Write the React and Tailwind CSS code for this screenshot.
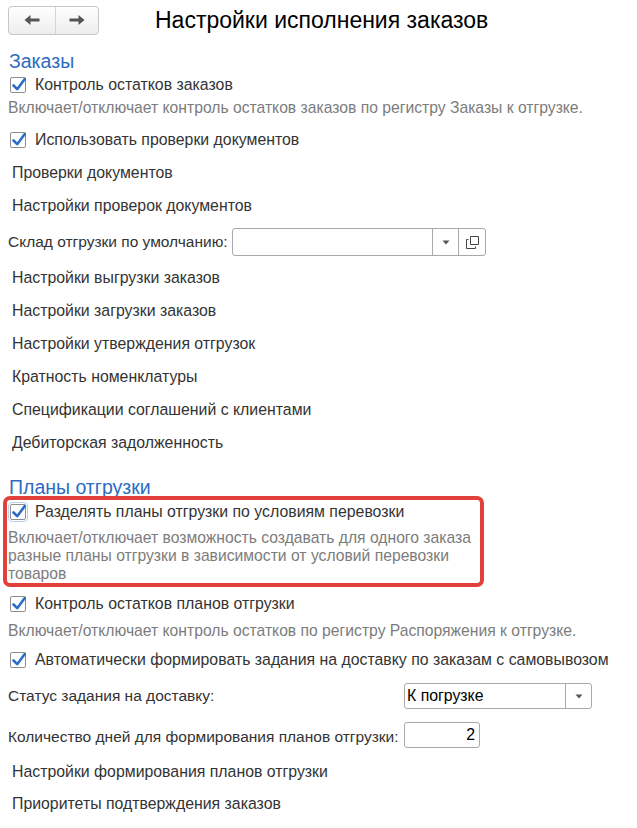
import React from 'react';

const font = { fontFamily: '"Liberation Sans", Arial, sans-serif' };

const Check = ({ focused }) => (
  <span
    className={`relative w-[16px] h-[16px] shrink-0 rounded-[2px] border border-[#8e8e8e] bg-white ${focused ? 'outline outline-1 outline-offset-1 outline-[#b9d1ee]' : ''}`}
  >
    <svg className="absolute left-[0px] top-[-2px]" width="16" height="17" viewBox="0 0 16 17">
      <path d="M2.5 9.5 L6.2 13.2 L13.8 3" fill="none" stroke="#2a6cc6" strokeWidth="2.6" strokeLinecap="round" strokeLinejoin="round" />
    </svg>
  </span>
);

const CheckRow = ({ children, className = '', focused }) => (
  <div className={`h-[22px] flex items-center gap-[9px] pl-[10px] text-[15.85px] text-[#333] ${className}`}>
    <Check focused={focused} />
    <span className="whitespace-nowrap">{children}</span>
  </div>
);

const Desc = ({ children, className = '' }) => (
  <div className={`pl-[8px] text-[15.7px] leading-[18px] whitespace-nowrap text-[#7c7c7c] ${className}`}>{children}</div>
);

const Link = ({ children, className = 'mt-[11px]' }) => (
  <div className={`h-[22px] flex items-center pl-[12px] text-[15.85px] text-[#333] ${className}`}>{children}</div>
);

const Section = ({ children, className = '' }) => (
  <div className={`pl-[9px] text-[19.5px] leading-[22px] text-[#2d6cc1] ${className}`}>{children}</div>
);

const Tri = () => (
  <svg width="8" height="5" viewBox="0 0 8 5">
    <path d="M0.5 0.5 H7.5 L4 4.5 Z" fill="#555" />
  </svg>
);

const App = () => {
  return (
    <div className="w-[637px] h-[828px] bg-white overflow-hidden" style={font}>
      {/* header */}
      <div className="h-[40px] flex items-center">
        <div className="ml-[8px] w-[91px] h-[29px] flex rounded-[4px] border border-[#c6c6c6] bg-gradient-to-b from-white to-[#ededed]">
          <div className="w-[47px] flex items-center justify-center border-r border-[#d6d6d6]">
            <svg width="16" height="12" viewBox="0 0 16 12">
              <path d="M0.5 6 L6.5 1 V4.4 H15.5 V7.6 H6.5 V11 Z" fill="#555" />
            </svg>
          </div>
          <div className="flex-1 flex items-center justify-center">
            <svg width="16" height="12" viewBox="0 0 16 12">
              <path d="M15.5 6 L9.5 1 V4.4 H0.5 V7.6 H9.5 V11 Z" fill="#555" />
            </svg>
          </div>
        </div>
        <div className="ml-[56px] text-[23px] text-black leading-[28px] whitespace-nowrap">Настройки исполнения заказов</div>
      </div>

      <Section className="mt-[10px]">Заказы</Section>
      <CheckRow className="mt-[2px]">Контроль остатков заказов</CheckRow>
      <Desc className="mt-[3px]">Включает/отключает контроль остатков заказов по регистру Заказы к отгрузке.</Desc>
      <CheckRow className="mt-[12px]">Использовать проверки документов</CheckRow>
      <Link>Проверки документов</Link>
      <Link>Настройки проверок документов</Link>

      <div className="mt-[11px] h-[28px] flex items-center text-[15.5px] text-[#333]">
        <span className="pl-[8px] w-[232px] whitespace-nowrap">Склад отгрузки по умолчанию:</span>
        <div className="w-[254px] h-[28px] flex rounded-[3px] border border-[#a9a9a9] bg-white">
          <div className="flex-1 border-r border-[#a9a9a9]" />
          <div className="w-[26px] flex items-center justify-center border-r border-[#a9a9a9]">
            <Tri />
          </div>
          <div className="w-[26px] flex items-center justify-center">
            <svg width="13" height="13" viewBox="0 0 13 13">
              <path d="M4.5 0.5 H12.5 V8.5 H4.5 Z" fill="none" stroke="#444" strokeWidth="1" />
              <path d="M2.5 3.5 H0.5 V12.5 H9.5 V10.5" fill="none" stroke="#444" strokeWidth="1" />
            </svg>
          </div>
        </div>
      </div>

      <Link>Настройки выгрузки заказов</Link>
      <Link>Настройки загрузки заказов</Link>
      <Link>Настройки утверждения отгрузок</Link>
      <Link>Кратность номенклатуры</Link>
      <Link>Спецификации соглашений с клиентами</Link>
      <Link>Дебиторская задолженность</Link>

      <Section className="mt-[22px]">Планы отгрузки</Section>

      <div className="relative">
        <div className="absolute left-[3px] top-[-5px] w-[481px] h-[91px] rounded-[7px] border-[4px] border-[#e2403a] pointer-events-none" />
        <CheckRow className="mt-[3px]" focused>Разделять планы отгрузки по условиям перевозки</CheckRow>
        <Desc className="mt-[6px]">
          Включает/отключает возможность создавать для одного заказа
          <br />
          разные планы отгрузки в зависимости от условий перевозки
          <br />
          товаров
        </Desc>
      </div>

      <CheckRow className="mt-[10px]">Контроль остатков планов отгрузки</CheckRow>
      <Desc className="mt-[7px]">Включает/отключает контроль остатков по регистру Распоряжения к отгрузке.</Desc>
      <CheckRow className="mt-[9px]">Автоматически формировать задания на доставку по заказам с самовывозом</CheckRow>

      <div className="mt-[12px] h-[26px] flex items-center text-[15.5px] text-[#333]">
        <span className="pl-[8px] w-[404px] whitespace-nowrap">Статус задания на доставку:</span>
        <div className="w-[188px] h-[26px] flex rounded-[3px] border border-[#a9a9a9] bg-white">
          <div className="flex-1 flex items-center pl-[2px] text-[15.85px] text-black border-r border-[#a9a9a9]">К погрузке</div>
          <div className="w-[25px] flex items-center justify-center">
            <Tri />
          </div>
        </div>
      </div>

      <div className="mt-[13px] h-[26px] flex items-center text-[15.5px] text-[#333]">
        <span className="pl-[8px] w-[396px] pt-[3px] whitespace-nowrap">Количество дней для формирования планов отгрузки:</span>
        <div className="ml-[8px] w-[76px] h-[26px] flex items-center justify-end pr-[4px] rounded-[3px] border border-[#a9a9a9] bg-white text-[15.85px] text-black">
          2
        </div>
      </div>

      <Link className="mt-[13px]">Настройки формирования планов отгрузки</Link>
      <Link className="mt-[10px]">Приоритеты подтверждения заказов</Link>
    </div>
  );
};

export default App;
